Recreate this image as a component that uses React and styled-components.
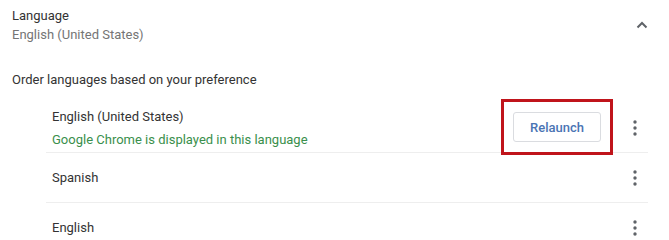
import styled, { createGlobalStyle } from 'styled-components';

const GlobalStyle = createGlobalStyle`
  html, body {
    margin: 0;
    padding: 0;
    background: #fff;
  }
  body {
    font-family: Roboto, "Liberation Sans", Arial, sans-serif;
    font-size: 13px;
    color: #333;
  }
`;

const Page = styled.div`
  width: 669px;
  height: 237px;
  overflow: hidden;
  background: #fff;
`;

const Header = styled.div`
  display: flex;
  align-items: center;
  justify-content: space-between;
  padding: 6px 15px 0 12px;
`;

const HeaderText = styled.div`
  display: flex;
  flex-direction: column;
  line-height: 19px;
`;

const Title = styled.div`
  color: #333;
`;

const Subtitle = styled.div`
  color: #757575;
`;

const IconButton = styled.button`
  display: flex;
  align-items: center;
  justify-content: center;
  width: 24px;
  height: 24px;
  padding: 0;
  border: none;
  background: none;
  color: #5f6368;
  cursor: pointer;
`;

const SectionLabel = styled.div`
  margin: 26px 0 0 12px;
  line-height: 20px;
  color: #333;
`;

const List = styled.div`
  margin: 14px 21px 0 46px;
`;

const Row = styled.div`
  display: flex;
  align-items: center;
  min-height: ${({ $height }) => $height}px;
  padding-left: 6px;
  border-bottom: 1px solid #eeeeee;
`;

const RowText = styled.div`
  flex: 1;
  display: flex;
  flex-direction: column;
  line-height: 20px;
`;

const Note = styled.div`
  margin-top: 3px;
  color: #3a8f4c;
`;

const Highlight = styled.div`
  display: flex;
  align-items: center;
  justify-content: center;
  width: 106px;
  height: 50px;
  margin: -5px 10px -3px 0;
  border: 3px solid #c0141b;
`;

const Relaunch = styled.button`
  width: 88px;
  height: 30px;
  border: 1px solid #dadce0;
  border-radius: 3px;
  background: #fff;
  color: #4a74b4;
  font-family: Roboto, "Liberation Sans", Arial, sans-serif;
  font-size: 13px;
  font-weight: 500;
  cursor: pointer;
`;

const MoreButton = styled(IconButton)`
  margin-right: 1px;
`;

const ChevronUp = () => (
  <svg width="12" height="8" viewBox="0 0 12 8">
    <path d="M1.5 6.5 L6 2 L10.5 6.5" fill="none" stroke="currentColor" strokeWidth="2" />
  </svg>
);

const Dots = () => (
  <svg width="4" height="16" viewBox="0 0 4 16">
    <circle cx="2" cy="2" r="1.7" fill="currentColor" />
    <circle cx="2" cy="8" r="1.7" fill="currentColor" />
    <circle cx="2" cy="14" r="1.7" fill="currentColor" />
  </svg>
);

const languages = [
  { name: 'English (United States)', note: 'Google Chrome is displayed in this language', relaunch: true, height: 48 },
  { name: 'Spanish', height: 49 },
  { name: 'English', height: 49 },
];

export default function App() {
  return (
    <Page>
      <GlobalStyle />
      <Header>
        <HeaderText>
          <Title>Language</Title>
          <Subtitle>English (United States)</Subtitle>
        </HeaderText>
        <IconButton aria-label="Collapse">
          <ChevronUp />
        </IconButton>
      </Header>
      <SectionLabel>Order languages based on your preference</SectionLabel>
      <List>
        {languages.map((lang) => (
          <Row key={lang.name} $height={lang.height}>
            <RowText>
              <span>{lang.name}</span>
              {lang.note && <Note>{lang.note}</Note>}
            </RowText>
            {lang.relaunch && (
              <Highlight>
                <Relaunch>Relaunch</Relaunch>
              </Highlight>
            )}
            <MoreButton aria-label="More actions">
              <Dots />
            </MoreButton>
          </Row>
        ))}
      </List>
    </Page>
  );
}
